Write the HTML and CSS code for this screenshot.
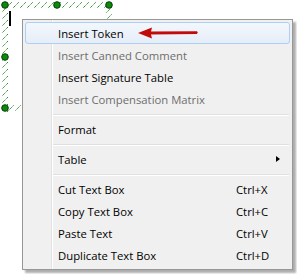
FILE: index.html
```html
<!DOCTYPE html>
<html>
<head>
<meta charset="utf-8">
<link rel="stylesheet" href="styles.css">
</head>
<body>
<svg class="frame" width="120" height="120" viewBox="0 0 120 120">
  <defs>
    <pattern id="hatch" width="7" height="7" patternUnits="userSpaceOnUse">
      <path d="M0 7 L7 0" stroke="#2f8f2f" stroke-width="1" stroke-dasharray="1.4 0.6"/>
    </pattern>
  </defs>
  <rect x="2" y="2" width="110" height="6" fill="url(#hatch)"/>
  <rect x="2" y="2" width="6" height="110" fill="url(#hatch)"/>
  <rect x="106" y="2" width="6" height="110" fill="url(#hatch)"/>
  <rect x="2" y="105" width="110" height="6" fill="url(#hatch)"/>
  <g fill="#0b8a0b" stroke="#0a3d0a" stroke-width="1">
    <circle cx="5" cy="5" r="3.3"/>
    <circle cx="57" cy="5" r="3.3"/>
    <circle cx="109" cy="5" r="3.3"/>
    <circle cx="5" cy="57" r="3.3"/>
    <circle cx="5" cy="108" r="3.3"/>
  </g>
  <rect x="9" y="11" width="2" height="15" fill="#000"/>
</svg>

<div class="menu">
  <div class="item active"><span class="label">Insert Token</span><span class="key"></span></div>
  <div class="item disabled"><span class="label">Insert Canned Comment</span><span class="key"></span></div>
  <div class="item"><span class="label">Insert Signature Table</span><span class="key"></span></div>
  <div class="item disabled"><span class="label">Insert Compensation Matrix</span><span class="key"></span></div>
  <div class="sep"></div>
  <div class="item"><span class="label">Format</span><span class="key"></span></div>
  <div class="sep"></div>
  <div class="item"><span class="label">Table</span><span class="key"><span class="sub"></span></span></div>
  <div class="sep"></div>
  <div class="item"><span class="label">Cut Text Box</span><span class="key">Ctrl+X</span></div>
  <div class="item"><span class="label">Copy Text Box</span><span class="key">Ctrl+C</span></div>
  <div class="item"><span class="label">Paste Text</span><span class="key">Ctrl+V</span></div>
  <div class="item"><span class="label">Duplicate Text Box</span><span class="key">Ctrl+D</span></div>
</div>

<svg class="pointer" width="62" height="14" viewBox="0 0 62 14">
  <path d="M0 6 L14 0.5 L13 4.6 L59 4.2 Q60.5 5.5 59 7 L13 7.6 L14 11.5 Z" fill="#c20a0a"/>
</svg>
</body>
</html>
```

FILE: styles.css
```css
html, body {
  margin: 0;
  padding: 0;
  background: #ffffff;
}

body {
  width: 297px;
  height: 274px;
  position: relative;
  overflow: hidden;
  font-family: "Open Sans", Lato, "DejaVu Sans", sans-serif;
  font-size: 11.3px;
}

.frame {
  position: absolute;
  left: 0;
  top: 0;
  display: block;
}

.menu {
  position: absolute;
  left: 22px;
  top: 19px;
  width: 265px;
  padding: 2px 2px 3px 2px;
  border: 1px solid #979797;
  background:
    linear-gradient(to right,
      transparent 28px, #e2e3e3 28px, #e2e3e3 29px,
      #ffffff 29px, #ffffff 30px, transparent 30px),
    #f0f0f0;
  box-shadow: 3px 3px 2px rgba(0, 0, 0, 0.32);
  display: flex;
  flex-direction: column;
}

.item {
  height: 22px;
  display: grid;
  grid-template-columns: 1fr 53px;
  align-items: center;
  padding-left: 32px;
  color: #000;
  line-height: 19px;
  border: 1px solid transparent;
  border-radius: 3px;
  box-sizing: border-box;
}

.item.active {
  border-color: #aecff7;
  background: linear-gradient(to bottom, #f3f7fc, #e5edf8);
}

.item.disabled {
  color: #6d6d6d;
}

.label {
  white-space: nowrap;
}

.key {
  white-space: nowrap;
  display: flex;
  align-items: center;
}

.sub {
  display: block;
  margin-left: 40px;
  width: 0;
  height: 0;
  border-left: 4px solid #000;
  border-top: 3.5px solid transparent;
  border-bottom: 3.5px solid transparent;
}

.sep {
  height: 8px;
  margin-left: 28px;
  margin-right: 1px;
  background: linear-gradient(to bottom,
    transparent 4px, #e0e0e0 4px, #e0e0e0 5px,
    #ffffff 5px, #ffffff 6px, transparent 6px);
}

.pointer {
  position: absolute;
  left: 138px;
  top: 27px;
  display: block;
}
```
